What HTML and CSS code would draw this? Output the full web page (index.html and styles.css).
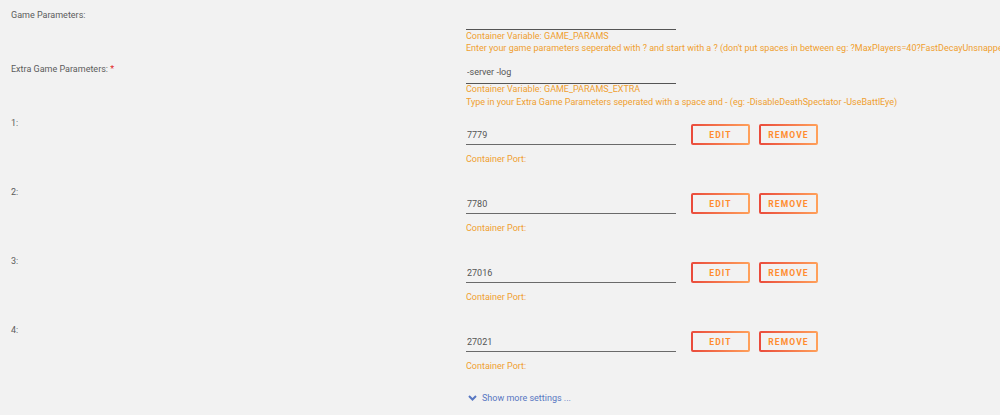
FILE: index.html
```html
<!DOCTYPE html>
<html lang="en">
<head>
    <meta charset="UTF-8">
    <title>Container Settings</title>
    <link rel="stylesheet" href="styles.css">
</head>
<body>
    <div class="settings">
        <div class="setting">
            <div class="setting-label">Game Parameters:</div>
            <div class="setting-value">
                <input class="field" type="text" value="">
                <div class="desc">
                    <p>Container Variable: GAME_PARAMS</p>
                    <p>Enter your game parameters seperated with ? and start with a ? (don't put spaces in between eg: ?MaxPlayers=40?FastDecayUnsnappedItems=true)</p>
                </div>
            </div>
        </div>

        <div class="setting">
            <div class="setting-label">Extra Game Parameters: <span class="required">*</span></div>
            <div class="setting-value">
                <input class="field" type="text" value="-server -log">
                <div class="desc">
                    <p>Container Variable: GAME_PARAMS_EXTRA</p>
                    <p>Type in your Extra Game Parameters seperated with a space and - (eg: -DisableDeathSpectator -UseBattlEye)</p>
                </div>
            </div>
        </div>

        <div class="setting port">
            <div class="setting-label">1:</div>
            <div class="setting-value">
                <div class="field-row">
                    <input class="field" type="text" value="7779">
                    <button class="btn">Edit</button>
                    <button class="btn">Remove</button>
                </div>
                <div class="desc"><p>Container Port:</p></div>
            </div>
        </div>

        <div class="setting port">
            <div class="setting-label">2:</div>
            <div class="setting-value">
                <div class="field-row">
                    <input class="field" type="text" value="7780">
                    <button class="btn">Edit</button>
                    <button class="btn">Remove</button>
                </div>
                <div class="desc"><p>Container Port:</p></div>
            </div>
        </div>

        <div class="setting port">
            <div class="setting-label">3:</div>
            <div class="setting-value">
                <div class="field-row">
                    <input class="field" type="text" value="27016">
                    <button class="btn">Edit</button>
                    <button class="btn">Remove</button>
                </div>
                <div class="desc"><p>Container Port:</p></div>
            </div>
        </div>

        <div class="setting port">
            <div class="setting-label">4:</div>
            <div class="setting-value">
                <div class="field-row">
                    <input class="field" type="text" value="27021">
                    <button class="btn">Edit</button>
                    <button class="btn">Remove</button>
                </div>
                <div class="desc"><p>Container Port:</p></div>
            </div>
        </div>

        <div class="setting more">
            <div class="setting-label"></div>
            <div class="setting-value">
                <a class="show-more" href="#">
                    <svg class="chevron" width="9" height="6" viewBox="0 0 9 6">
                        <polyline points="1,1 4.5,4.5 8,1" fill="none" stroke="currentColor" stroke-width="2"/>
                    </svg>
                    Show more settings ...
                </a>
            </div>
        </div>
    </div>
</body>
</html>
```

FILE: styles.css
```css
* {
    margin: 0;
    padding: 0;
    box-sizing: border-box;
}

body {
    background: #f2f2f2;
    color: #5c5c5c;
    font-family: Roboto, "Open Sans", sans-serif;
    font-size: 9px;
    overflow: hidden;
}

.settings {
    padding-top: 8px;
}

/* label column + value column */
.setting {
    display: grid;
    grid-template-columns: 466px 1fr;
    margin-bottom: 7px;
}

.setting-label {
    padding-left: 11px;
    line-height: 14px;
}

.required {
    color: #e22828;
}

.setting-value {
    min-width: 0;
    overflow: hidden;
    white-space: nowrap;
}

.field {
    display: block;
    width: 210px;
    height: 22px;
    border: none;
    border-bottom: 1px solid #555;
    background: transparent;
    color: #555;
    font: inherit;
    padding: 0 1px;
    outline: none;
}

.desc {
    margin-top: -0.5px;
    color: #f0a030;
    line-height: 12.5px;
}

/* port mappings: input with edit/remove buttons */
.port {
    margin-bottom: 19px;
}

.port .setting-label {
    padding-top: 1px;
}

.port .setting-value {
    padding-top: 9px;
}

.field-row {
    display: flex;
    align-items: flex-start;
}

.port .field {
    height: 21px;
    padding-top: 1px;
    border-bottom-color: #6a6a6a;
}

.port .desc {
    margin-top: 7.5px;
}

.btn {
    width: 59px;
    height: 21px;
    margin-left: 15px;
    border: none;
    border-radius: 2px;
    color: #ff8c2f;
    font-family: Roboto, sans-serif;
    font-size: 8.5px;
    font-weight: bold;
    letter-spacing: 1.1px;
    text-transform: uppercase;
    background:
        linear-gradient(90deg, #ea4b3c 0, #ffa05a) 0 0 no-repeat,
        linear-gradient(90deg, #ea4b3c 0, #ffa05a) 0 100% no-repeat,
        linear-gradient(0deg, #ea4b3c 0, #ea4b3c) 0 100% no-repeat,
        linear-gradient(0deg, #ffa05a 0, #ffa05a) 100% 100% no-repeat;
    background-size: 100% 2px, 100% 2px, 2px 100%, 2px 100%;
    cursor: pointer;
}

.btn + .btn {
    margin-left: 9px;
}

.more {
    margin-top: 3px;
}

.show-more {
    display: inline-flex;
    align-items: center;
    gap: 5px;
    padding-left: 2px;
    color: #5877c2;
    text-decoration: none;
    line-height: 14px;
}

.chevron {
    display: block;
}
```
